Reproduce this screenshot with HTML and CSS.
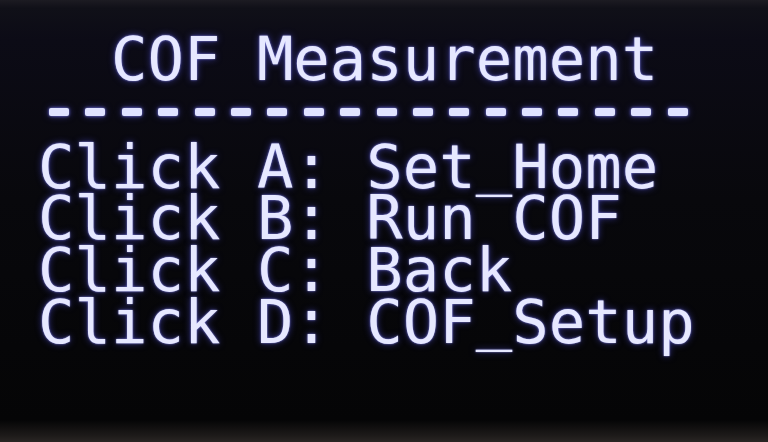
FILE: index.html
```html
<!DOCTYPE html>
<html lang="en">
<head>
<meta charset="utf-8">
<title>COF Measurement</title>
<link rel="stylesheet" href="styles.css">
</head>
<body>
<div class="frame">
  <div class="screen">
    <div class="line title">  COF Measurement</div>
    <div class="rule">
      <span class="dash"></span><span class="dash"></span><span class="dash"></span><span class="dash"></span><span class="dash"></span><span class="dash"></span>
      <span class="dash"></span><span class="dash"></span><span class="dash"></span><span class="dash"></span><span class="dash"></span><span class="dash"></span>
      <span class="dash"></span><span class="dash"></span><span class="dash"></span><span class="dash"></span><span class="dash"></span><span class="dash"></span>
    </div>
    <div class="menu">
      <div class="line">Click A: Set<span class="us">_</span>Home</div>
      <div class="line">Click B: Run COF</div>
      <div class="line">Click C: Back</div>
      <div class="line">Click D: COF<span class="us">_</span>Setup</div>
    </div>
  </div>
</div>
</body>
</html>
```
FILE: styles.css
```css
html, body {
  margin: 0;
  padding: 0;
  width: 768px;
  height: 442px;
  overflow: hidden;
  background: #060608;
}

.frame {
  width: 768px;
  height: 442px;
  background: linear-gradient(180deg, #1c1b22 0px, #101018 8px, #0c0b16 40px, #08080c 200px, #050506 420px, #1e1b1a 436px, #2a2624 442px);
  box-sizing: border-box;
}

.screen {
  padding: 34px 0 0 38px;
  font-family: "DejaVu Sans Mono", "Liberation Mono", monospace;
  font-size: 60.6px;
  color: #e6e8ff;
  text-shadow: 0 0 2px rgba(160, 160, 255, 0.9), 0 0 7px rgba(90, 90, 255, 0.55);
}

.line {
  white-space: pre;
  height: 51.7px;
  line-height: 51.7px;
}

.us {
  position: relative;
  top: -5px;
}

.rule {
  display: flex;
  gap: 16.4px;
  margin: 22px 0 0 11px;
  height: 8px;
}

.dash {
  display: block;
  width: 20px;
  height: 8px;
  border-radius: 2px;
  background: #e0e3ff;
  box-shadow: 0 0 3px rgba(140, 140, 255, 0.9), 0 0 7px rgba(90, 90, 255, 0.5);
}

.menu {
  margin-top: 26px;
}
```
